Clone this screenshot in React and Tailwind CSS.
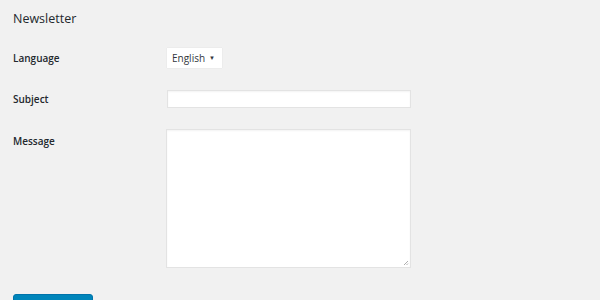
import React from 'react';

const App = () => {
  return (
    <div className="min-h-screen bg-[#f1f1f1] pl-[13px] pt-[10px] text-[#23282d] font-['Segoe_UI','Open_Sans','Liberation_Sans',sans-serif]">
      <h2 className="text-[12.5px] leading-[18px] font-medium">Newsletter</h2>

      <div className="mt-[20px] flex items-center">
        <label className="w-[154px] text-[10px] font-semibold">Language</label>
        <div className="h-[20px] w-[55px] bg-white shadow-[0_0_1px_rgba(0,0,0,0.12)] flex items-center pl-[5px] pr-[7px] justify-between">
          <span className="text-[10px] text-[#32373c]">English</span>
          <span className="text-[6px] text-[#32373c]">▼</span>
        </div>
      </div>

      <div className="mt-[22px] flex items-center">
        <label className="w-[154px] pt-[1px] text-[10px] font-semibold">Subject</label>
        <div className="h-[18px] w-[244px] bg-white border border-[#e3e3e3] shadow-[inset_0_1px_2px_rgba(0,0,0,0.05)]" />
      </div>

      <div className="mt-[21px] flex items-start">
        <label className="w-[153px] pt-[5px] text-[10px] font-semibold">Message</label>
        <div className="relative h-[139px] w-[245px] bg-white border border-[#e3e3e3] shadow-[inset_0_1px_2px_rgba(0,0,0,0.05)]">
          <svg className="absolute right-[1px] bottom-[1px]" width="6" height="6" viewBox="0 0 6 6">
            <path d="M5 1 L1 5 M5 3.5 L3.5 5" stroke="#999" strokeWidth="0.8" />
          </svg>
        </div>
      </div>

      <div className="mt-[26px] h-[28px] w-[80px] rounded-[3px] bg-[#0085ba] border border-[#0073aa]" />
    </div>
  );
};

export default App;
